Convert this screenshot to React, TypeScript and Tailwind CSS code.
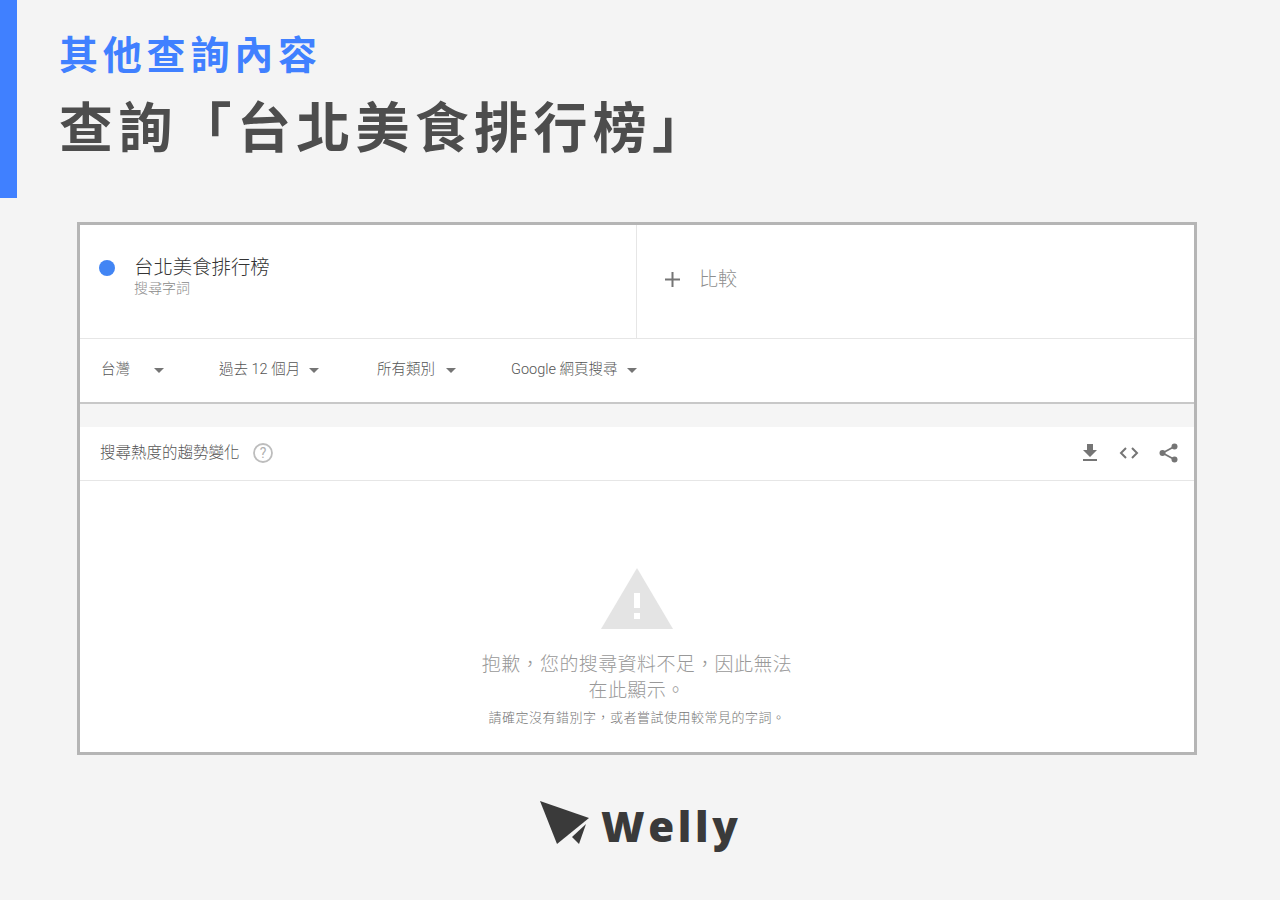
import React from "react";

const cjk = "font-['Roboto','Noto_Sans_CJK_TC',sans-serif]";

function Caret({ className = "" }: { className?: string }) {
  return (
    <svg width="10" height="5" viewBox="0 0 10 5" className={className}>
      <path d="M0 0h10L5 5z" fill="#757575" />
    </svg>
  );
}

function FilterItem({ label, width, gap }: { label: string; width: string; gap: string }) {
  return (
    <div className={`flex items-center ${width}`}>
      <span className="text-[14.5px] leading-[20px] font-light text-[#555]">{label}</span>
      <Caret className={gap} />
    </div>
  );
}

function PaperPlane() {
  return (
    <svg width="50" height="44" viewBox="0 0 50 44" className="shrink-0">
      <path d="M0 0 L49 17 L17 43 Z" fill="#3a3a3a" />
      <path d="M32 36 L46 23 L39 43 Z" fill="#3a3a3a" />
    </svg>
  );
}

export default function App() {
  return (
    <div lang="zh-TW" className={`w-[1280px] h-[900px] bg-[#f4f4f4] overflow-hidden ${cjk}`}>
      {/* header */}
      <div className="flex h-[198px]">
        <div className="w-[17px] h-full bg-[#4080ff]" />
        <div className="pl-[42px] pt-[30px]">
          <h2 className="text-[39px] leading-[52px] font-bold tracking-[4.8px] text-[#4080ff] whitespace-nowrap">其他查詢內容</h2>
          <h1 className="mt-[14px] text-[54px] leading-[68px] font-bold tracking-[5.3px] text-[#4d4d4d] whitespace-nowrap">
            查詢「台北美食排行榜」
          </h1>
        </div>
      </div>

      {/* trends card */}
      <div className="mt-[24px] ml-[77px] w-[1120px] h-[533px] border-[3px] border-[#b5b5b5] bg-white flex flex-col">
        <div className="flex h-[114px] border-b border-[#e6e6e6] shrink-0">
          <div className="w-[557px] border-r border-[#e6e6e6] flex items-start pl-[19px] pt-[30px]">
            <div className="w-[16px] h-[16px] mt-[5px] rounded-full bg-[#4285f4]" />
            <div className="ml-[19px]">
              <div className="text-[19.4px] leading-[26px] font-light text-[#333]">台北美食排行榜</div>
              <div className="text-[14px] leading-[16px] font-light text-[#8a8a8a] -mt-[1px]">搜尋字詞</div>
            </div>
          </div>
          <div className="flex items-center pl-[28px] pb-[4px]">
            <svg width="15" height="15" viewBox="0 0 15 15">
              <path d="M6.5 0h2v6.5H15v2H8.5V15h-2V8.5H0v-2h6.5z" fill="#757575" />
            </svg>
            <span className="ml-[19px] text-[19px] leading-[26px] font-light text-[#8f8f8f]">比較</span>
          </div>
        </div>

        <div className="flex items-center h-[65px] pl-[21px] pb-[1px] border-b-[2px] border-[#c8c8c8] shrink-0">
          <FilterItem label="台灣" width="w-[118px]" gap="ml-[24px]" />
          <FilterItem label="過去 12 個月" width="w-[158px]" gap="ml-[9px]" />
          <FilterItem label="所有類別" width="w-[134px]" gap="ml-[11px]" />
          <FilterItem label="Google 網頁搜尋" width="w-[140px]" gap="ml-[9px]" />
        </div>

        <div className="h-[23px] bg-[#f5f5f5] shrink-0" />

        <div className="flex items-center justify-between h-[54px] pl-[20px] pr-[16px] pb-[2px] border-b border-[#e6e6e6] shrink-0">
          <div className="flex items-center">
            <span className="text-[15.5px] leading-[20px] font-light text-[#555]">搜尋熱度的趨勢變化</span>
            <svg width="20" height="20" viewBox="0 0 20 20" className="ml-[13px]">
              <circle cx="10" cy="10" r="9" fill="none" stroke="#bdbdbd" strokeWidth="1.8" />
              <text x="10" y="15" textAnchor="middle" fontSize="14" fontFamily="Roboto" fill="#b0b0b0">?</text>
            </svg>
          </div>
          <div className="flex items-center">
            <svg width="16" height="17" viewBox="0 0 16 17" fill="#757575">
              <path d="M5 0h6v6h4l-7 7-7-7h4z" />
              <path d="M1 15h14v2H1z" />
            </svg>
            <svg width="20" height="12" viewBox="0 0 20 12" fill="none" stroke="#757575" strokeWidth="2" className="ml-[21px]">
              <path d="M7 1 2 6l5 5M13 1l5 5-5 5" />
            </svg>
            <svg width="19" height="20" viewBox="0 0 19 20" className="ml-[20px]" fill="#757575">
              <circle cx="15.5" cy="3.5" r="3" />
              <circle cx="15.5" cy="16.5" r="3" />
              <circle cx="3.5" cy="10" r="3" />
              <path d="M3.5 10 15.5 3.5M3.5 10l12 6.5" stroke="#757575" strokeWidth="1.8" fill="none" />
            </svg>
          </div>
        </div>

        <div className="flex-1 flex flex-col items-center pt-[87px]">
          <svg width="72" height="61" viewBox="0 0 72 61">
            <path d="M36 0 72 61H0z" fill="#e4e4e4" />
            <path d="M33 25h6v15h-6zM33 45h6v6h-6z" fill="#fff" />
          </svg>
          <div className="mt-[21px] w-[320px] text-center font-['Noto_Sans_CJK_TC',sans-serif] text-[19px] leading-[26px] tracking-[0.4px] font-light text-[#999]">
            {"抱歉\uFF0C您的搜尋資料不足\uFF0C因此無法在此顯示。"}
          </div>
          <div className="mt-[6px] font-['Noto_Sans_CJK_TC',sans-serif] text-[13px] leading-[18px] tracking-[0.5px] font-light text-[#777]">
            {"請確定沒有錯別字\uFF0C或者嘗試使用較常見的字詞。"}
          </div>
        </div>
      </div>

      {/* logo */}
      <div className="mt-[46px] flex justify-center">
        <div className="flex items-start w-[200px]">
          <PaperPlane />
          <span className="ml-[11px] -mt-[1px] font-['Open_Sans',sans-serif] text-[42px] leading-[52px] font-extrabold tracking-[3.6px] text-[#3a3a3a] whitespace-nowrap">
            Welly
          </span>
        </div>
      </div>
    </div>
  );
}
